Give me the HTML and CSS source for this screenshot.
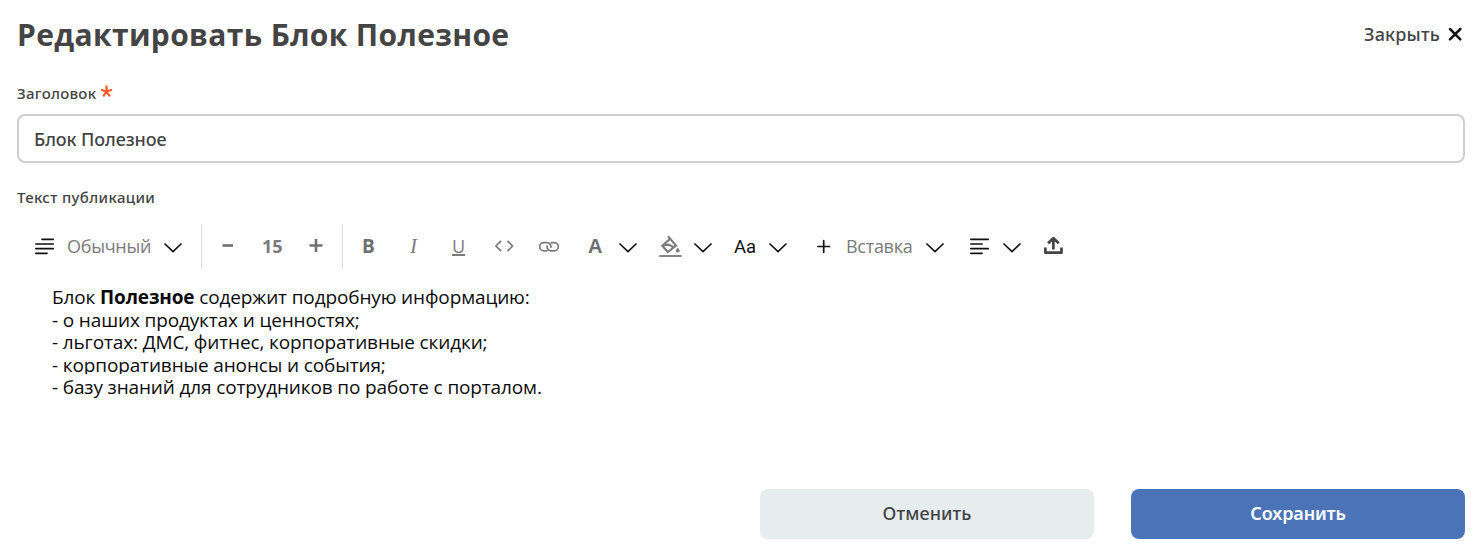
FILE: index.html
```
<!DOCTYPE html>
<html lang="ru">
<head>
<meta charset="utf-8">
<title>Редактировать Блок Полезное</title>
<link rel="stylesheet" href="styles.css">
</head>
<body>
<main class="dialog">
  <header class="header">
    <h1 class="title">Редактировать Блок Полезное</h1>
    <button class="close"><span>Закрыть</span><svg width="15" height="14" viewBox="0 0 15 14"><path d="M2 2L12.300 12.300M12.300 2L2 12.300" stroke="#141414" stroke-width="2.500" stroke-linecap="round"/></svg></button>
  </header>
  <label class="label label-title"><span>Заголовок</span><svg class="required" width="13" height="13" viewBox="0 0 13 13"><path d="M6.500 6.500V.5M6.500 6.500L1 4.800M6.500 6.500L12 4.800M6.500 6.500L3.200 11.300M6.500 6.500L9.800 11.300" stroke="#ff5a26" stroke-width="2.200"/></svg></label>
  <div class="field">Блок Полезное</div>
  <div class="label label-text"><span>Текст публикации</span></div>
  <div class="toolbar">
    <svg width="20" height="18" viewBox="0 0 20 18"><path d="M7 1.300H18.200M.8 6H18.200M.8 10.700H18.200M.8 15.300H12" class="dark"/></svg>
    <span class="style-name">Обычный</span>
    <svg width="18" height="18" viewBox="0 0 18 18"><path d="M1 6L9 13.500L17 6" class="dark"/></svg>
    <i class="separator"></i>
    <svg width="12" height="18" viewBox="0 0 12 18"><path d="M.5 7.500H11" class="bold"/></svg>
    <b class="size">15</b>
    <svg width="14" height="18" viewBox="0 0 14 18"><path d="M.5 7.500H13.500M7 1V14" class="bold"/></svg>
    <i class="separator"></i>
    <b class="letter">B</b>
    <em class="italic">I</em>
    <span class="underline">U</span>
    <svg width="19" height="18" viewBox="0 0 19 18"><path d="M6 2.800L1 8L6 13.200M12.500 2.800L17.500 8L12.500 13.200" class="gray"/></svg>
    <svg width="20" height="18" viewBox="0 0 20 18"><path d="M8.500 12.800H4.800A4.100 4.100 0 0 1 4.800 4.600H8.200A4 4 0 0 1 11.700 10M11.500 4.600H15.200A4.100 4.100 0 0 1 15.200 12.800H11.800A4 4 0 0 1 8.300 7.400" class="gray"/></svg>
    <b class="letter letter-color">A</b>
    <svg width="18" height="18" viewBox="0 0 18 18"><path d="M1 6L9 13.500L17 6" class="dark"/></svg>
    <svg width="24" height="24" viewBox="0 0 24 24"><path d="M9 1.300L17 10.500L8.800 17L3.300 10.800L11 3.900M4 10.500L9.500 9.600L14.500 12" fill="none" stroke="#7b7b7b" stroke-width="2.100"/><path d="M18.800 12.500Q16.500 15 16.700 16.500Q18.700 18.500 20.700 16.500Q21 15 18.800 12.500Z" fill="#7b7b7b"/><path d="M1 21H22" stroke="#858585" stroke-width="2" stroke-linecap="round"/></svg>
    <svg width="18" height="18" viewBox="0 0 18 18"><path d="M1 6L9 13.500L17 6" class="dark"/></svg>
    <span class="case">Aa</span>
    <svg width="18" height="18" viewBox="0 0 18 18"><path d="M1 6L9 13.500L17 6" class="dark"/></svg>
    <svg width="14" height="18" viewBox="0 0 14 18"><path d="M1 8.500H12.500M6.700 2.700V14.300" class="dark"/></svg>
    <span class="insert">Вставка</span>
    <svg width="18" height="18" viewBox="0 0 18 18"><path d="M1 6L9 13.500L17 6" class="dark"/></svg>
    <svg width="20" height="18" viewBox="0 0 20 18"><path d="M.8 1.300H18.200M.8 6H12M.8 10.700H18.200M.8 15.300H12" class="dark"/></svg>
    <svg width="18" height="18" viewBox="0 0 18 18"><path d="M1 6L9 13.500L17 6" class="dark"/></svg>
    <svg width="20" height="20" viewBox="0 0 20 20"><path d="M9.400 12.500V2M4 6.300L9.400 1.200L14.800 6.300" fill="none" stroke="#444" stroke-width="2.700"/><path d="M1.400 10.500V15.700H17.500V10.500" fill="none" stroke="#444" stroke-width="2.700" stroke-linejoin="round"/></svg>
  </div>
  <div class="editor">
    <p>Блок <b>Полезное</b> содержит подробную информацию:</p>
    <p>- о наших продуктах и ценностях;</p>
    <p>- льготах: ДМС, фитнес, корпоративные скидки;</p>
    <p class="clipped">- корпоративные анонсы и события;</p>
    <p>- базу знаний для сотрудников по работе с порталом.</p>
  </div>
  <footer class="actions">
    <button class="button cancel">Отменить</button>
    <button class="button save">Сохранить</button>
  </footer>
</main>
</body>
</html>
```
FILE: styles.css
```
* { box-sizing: border-box; }
body { margin: 0; background: #fff; color: #444; font-family: "Noto Sans", "Open Sans", sans-serif; }
button { border: 0; background: none; padding: 0; font: inherit; color: inherit; }
svg { display: block; flex: none; }
.dialog { width: 1480px; height: 551px; padding: 0 15px 12px 17px; display: flex; flex-direction: column; overflow: hidden; }
.header { height: 72px; display: flex; justify-content: space-between; align-items: center; }
.title { margin: 0 0 2px; font-family: "Open Sans", sans-serif; font-size: 30px; line-height: 40px; font-weight: 700; letter-spacing: .35px; white-space: nowrap; }
.close { display: flex; align-items: center; gap: 8px; font-size: 18px; line-height: 24px; font-weight: 500; letter-spacing: .2px; margin: 0 2px 4px 0; }
.label { height: 42px; display: flex; align-items: center; gap: 4px; font-size: 15px; line-height: 20px; font-weight: 500; letter-spacing: .27px; }
.required { margin-bottom: 4px; }
.field { height: 49px; padding: 0 15px; border: 2px solid #cfcfcf; border-radius: 8px; display: flex; align-items: center; font-size: 18px; font-weight: 500; letter-spacing: -.1px; }
.label-text { height: 61px; padding-top: 6px; letter-spacing: .35px; }
.toolbar { height: 45px; padding-left: 18px; display: grid; align-items: center; white-space: nowrap; font-family: "Open Sans", sans-serif; font-size: 18px; line-height: 24px; color: #7b7b7b;
  grid-template-columns: 32px 97px 37px 21px 40px 47px 33px 20px 48px 42px 43px 44px 49px 31px 40px 35px 40px 35px 48px 29px 80px 44px 33px 41px 20px; }
.toolbar > span, .toolbar > b { margin-bottom: 2px; }
.style-name, .insert { letter-spacing: -.28px; }
.dark { fill: none; stroke: #111; stroke-width: 1.7; stroke-linecap: round; }
.gray { fill: none; stroke: #7b7b7b; stroke-width: 1.7; }
.bold { fill: none; stroke: #707070; stroke-width: 2.6; }
.separator { width: 1px; height: 45px; background: #dcdcdc; }
.letter { font-size: 19px; color: #707070; }
.letter-color { font-family: "Liberation Sans", sans-serif; font-size: 20px; }
.italic { font-family: "Liberation Serif", serif; font-size: 21px; margin-bottom: 2px; }
.underline { text-decoration: underline; text-decoration-thickness: 2px; text-underline-offset: 1px; }
.toolbar > .case { font-family: Roboto, sans-serif; font-size: 18.5px; color: #111; margin-bottom: 0; }
.editor { flex: 1; padding: 17px 35px 0; color: #0b0b0b; font-family: "Open Sans", sans-serif; font-size: 19px; letter-spacing: -.135px; }
.editor p { margin: 0; height: 22.5px; line-height: 22.5px; white-space: nowrap; }
.editor .clipped { height: 20px; margin-bottom: 2.5px; overflow: hidden; }
.actions { display: flex; justify-content: flex-end; gap: 37px; }
.button { width: 334px; height: 50px; padding-bottom: 2px; border-radius: 8px; font-size: 18px; font-weight: 500; }
.cancel { background: #e7edef; letter-spacing: .1px; }
.save { background: #4b74b8; color: #fff; font-weight: 600; letter-spacing: -.1px; }
```
